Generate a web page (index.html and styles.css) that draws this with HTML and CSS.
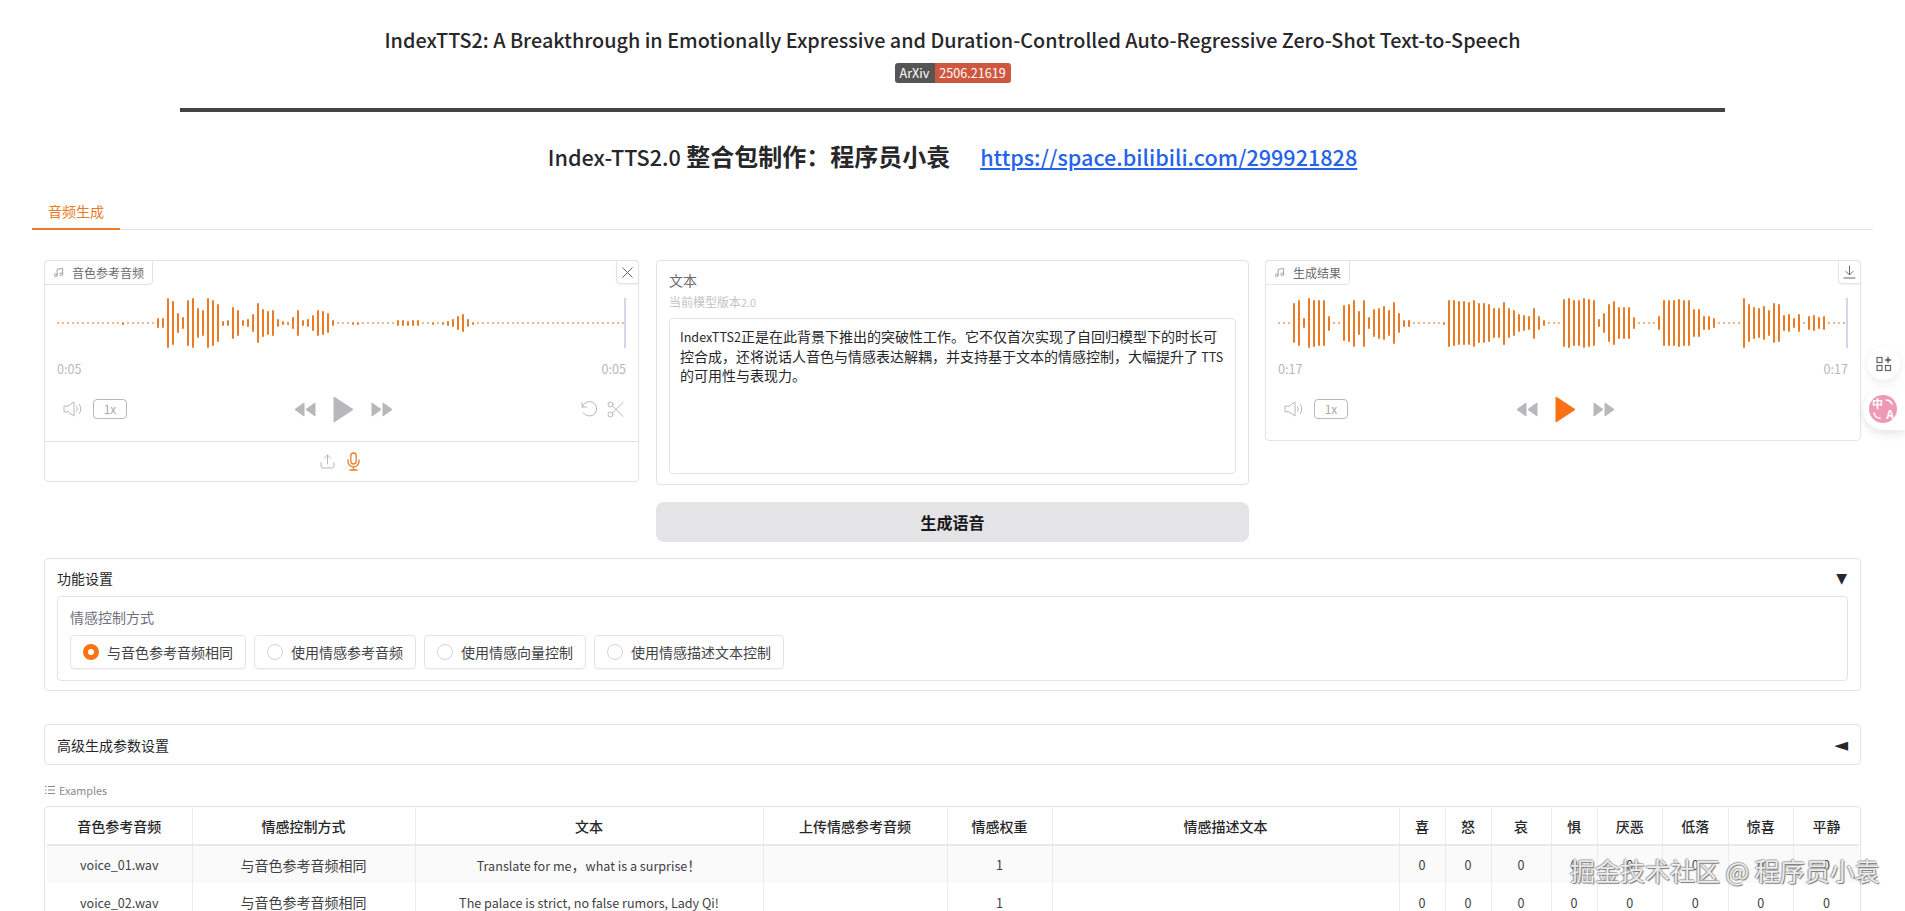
FILE: index.html
```html
<!DOCTYPE html>
<html lang="zh-CN">
<head>
<meta charset="utf-8">
<title>IndexTTS2</title>
<link rel="stylesheet" href="styles.css">
</head>
<body>
<svg class="defs" width="0" height="0" aria-hidden="true">
  <defs>
    <symbol id="i-note" viewBox="0 0 24 24"><path fill="none" stroke="currentColor" stroke-width="2" stroke-linecap="round" stroke-linejoin="round" d="M9 18V5l12-2v13"/><circle cx="6" cy="18" r="3" fill="none" stroke="currentColor" stroke-width="2"/><circle cx="18" cy="16" r="3" fill="none" stroke="currentColor" stroke-width="2"/></symbol>
    <symbol id="i-vol" viewBox="0 0 20 16"><path fill="none" stroke="currentColor" stroke-linejoin="round" d="M1 5.200h4L11 1v14L5 10.800H1z"/><path fill="none" stroke="currentColor" stroke-linecap="round" d="M13.500 5.500c.9 1.600.9 3.400 0 5M16.500 3.500c1.700 2.800 1.700 6.200 0 9"/></symbol>
    <symbol id="i-rew" viewBox="0 0 22 15"><path fill="currentColor" stroke="currentColor" stroke-linejoin="round" d="M10 1v13L1 7.500zM21 1v13l-9-6.500z"/></symbol>
    <symbol id="i-fwd" viewBox="0 0 22 15"><path fill="currentColor" stroke="currentColor" stroke-linejoin="round" d="M1 1v13l9-6.500zM12 1v13l9-6.500z"/></symbol>
    <symbol id="i-play" viewBox="0 0 21 27"><path fill="currentColor" stroke="currentColor" stroke-linejoin="round" d="M1 1v25l19-12.500z"/></symbol>
  </defs>
</svg>

<div class="page">
  <header class="hero">
    <h1 class="paper-title">IndexTTS2: A Breakthrough in Emotionally Expressive and Duration-Controlled Auto-Regressive Zero-Shot Text-to-Speech</h1>
    <div class="badge"><span class="badge-key">ArXiv</span><span class="badge-val">2506.21619</span></div>
    <hr class="rule">
    <h2 class="pack-title"><span class="latin">Index-TTS2.0</span> 整合包制作&#xFF1A;程序员小袁<a class="pack-link" href="#">https://space.bilibili.com/299921828</a></h2>
  </header>

  <nav class="tabs"><span class="tab">音频生成</span></nav>

  <main class="content">
    <section class="columns">
      <div class="audio-panel">
        <div class="block-label"><svg class="note"><use href="#i-note"/></svg>音色参考音频</div>
        <button class="corner-btn" aria-label="关闭">
          <svg width="11" height="11" viewBox="0 0 11 11"><path fill="none" stroke="currentColor" d="M.5.500l10 10M10.500.500l-10 10"/></svg>
        </button>
        <div class="wave-wrap"><div class="wave" data-wave="ref"></div><i class="cursor"></i></div>
        <div class="times"><span>0:05</span><span>0:05</span></div>
        <div class="controls">
          <div class="ctl-left">
            <svg class="vol"><use href="#i-vol"/></svg>
            <span class="rate">1x</span>
          </div>
          <div class="ctl-mid">
            <svg class="skip"><use href="#i-rew"/></svg>
            <svg class="play"><use href="#i-play"/></svg>
            <svg class="skip"><use href="#i-fwd"/></svg>
          </div>
          <div class="ctl-right">
            <svg class="tool" viewBox="0 0 17 17"><path fill="none" stroke="currentColor" stroke-linecap="round" stroke-linejoin="round" d="M1 1.500v4.500h4.500M1.300 6a7.300 7.300 0 1 1 1 5.800"/></svg>
            <svg class="tool" viewBox="0 0 17 17"><g fill="none" stroke="currentColor" stroke-linecap="round"><circle cx="3.500" cy="3.500" r="2.500"/><circle cx="3.500" cy="13.500" r="2.500"/><path d="M5.500 5L16 15.500M5.500 12L16 1.500"/></g></svg>
          </div>
        </div>
        <div class="sources">
          <svg class="src-up" viewBox="0 0 15 15"><path fill="none" stroke="currentColor" stroke-linecap="round" stroke-linejoin="round" d="M1 8.500v3.500a2 2 0 0 0 2 2h9a2 2 0 0 0 2-2V8.500M7.500 10V1M4.500 4l3-3 3 3"/></svg>
          <svg class="src-mic" viewBox="0 0 13 19"><g fill="none" stroke="currentColor" stroke-width="1.300" stroke-linecap="round"><rect x="3.800" y="1" width="5.400" height="11" rx="2.700"/><path d="M1 8v1.500a5.500 5.500 0 0 0 11 0V8M6.500 15v3M3 18h7"/></g></svg>
        </div>
      </div>

      <div class="text-col">
        <div class="text-panel">
          <div class="field-label">文本</div>
          <p class="field-info">当前模型版本<span class="lat">2.0</span></p>
          <div class="field-input"><span class="lat">IndexTTS2</span>正是在此背景下推出的突破性工作。它不仅首次实现了自回归模型下的时长可控合成&#xFF0C;还将说话人音色与情感表达解耦&#xFF0C;并支持基于文本的情感控制&#xFF0C;大幅提升了 <span class="lat">TTS</span> 的可用性与表现力。</div>
        </div>
        <button class="gen-btn">生成语音</button>
      </div>

      <div class="audio-panel result">
        <div class="block-label"><svg class="note"><use href="#i-note"/></svg>生成结果</div>
        <button class="corner-btn" aria-label="下载">
          <svg width="13" height="14" viewBox="0 0 13 14"><path fill="none" stroke="currentColor" stroke-linecap="round" stroke-linejoin="round" d="M6.500 1v8.500M3 6.500l3.500 3.500L10 6.500M1 13h11"/></svg>
        </button>
        <div class="wave-wrap"><div class="wave" data-wave="out"></div><i class="cursor"></i></div>
        <div class="times"><span>0:17</span><span>0:17</span></div>
        <div class="controls">
          <div class="ctl-left">
            <svg class="vol"><use href="#i-vol"/></svg>
            <span class="rate">1x</span>
          </div>
          <div class="ctl-mid">
            <svg class="skip"><use href="#i-rew"/></svg>
            <svg class="play on"><use href="#i-play"/></svg>
            <svg class="skip"><use href="#i-fwd"/></svg>
          </div>
          <div class="ctl-right"></div>
        </div>
      </div>
    </section>

    <section class="accordion open">
      <div class="acc-head"><span>功能设置</span><span class="acc-arrow">▼</span></div>
      <div class="group">
        <div class="group-label">情感控制方式</div>
        <div class="radios">
          <div class="radio"><i class="dot on"></i>与音色参考音频相同</div>
          <div class="radio"><i class="dot"></i>使用情感参考音频</div>
          <div class="radio"><i class="dot"></i>使用情感向量控制</div>
          <div class="radio"><i class="dot"></i>使用情感描述文本控制</div>
        </div>
      </div>
    </section>

    <section class="accordion closed">
      <div class="acc-head"><span>高级生成参数设置</span><span class="acc-arrow wide">◄</span></div>
    </section>

    <div class="examples-label">
      <svg width="10" height="10" viewBox="0 0 10 10"><path fill="none" stroke="currentColor" d="M3 1.500h7M3 5h7M3 8.500h7M0 1.500h1.500M0 5h1.500M0 8.500h1.500"/></svg>
      Examples
    </div>
    <div class="examples">
      <table>
        <colgroup>
          <col class="c1"><col class="c2"><col class="c3"><col class="c4"><col class="c5"><col class="c6">
          <col class="c7"><col class="c7"><col class="c8"><col class="c7"><col class="c9"><col class="c9"><col class="c9"><col class="c9">
        </colgroup>
        <thead>
          <tr><th>音色参考音频</th><th>情感控制方式</th><th>文本</th><th>上传情感参考音频</th><th>情感权重</th><th>情感描述文本</th><th>喜</th><th>怒</th><th>哀</th><th>惧</th><th>厌恶</th><th>低落</th><th>惊喜</th><th>平静</th></tr>
        </thead>
        <tbody>
          <tr class="alt"><td>voice_01.wav</td><td class="cjk">与音色参考音频相同</td><td class="cjk"><span class="lat">Translate for me</span>&#xFF0C;<span class="lat">what is a surprise</span>&#xFF01;</td><td></td><td>1</td><td></td><td>0</td><td>0</td><td>0</td><td>0</td><td>0</td><td>0</td><td>0</td><td>0</td></tr>
          <tr><td>voice_02.wav</td><td class="cjk">与音色参考音频相同</td><td>The palace is strict, no false rumors, Lady Qi!</td><td></td><td>1</td><td></td><td>0</td><td>0</td><td>0</td><td>0</td><td>0</td><td>0</td><td>0</td><td>0</td></tr>
        </tbody>
      </table>
    </div>
  </main>
</div>

<div class="float-apps">
  <svg width="16" height="16" viewBox="0 0 16 16"><g fill="none" stroke="#666" stroke-width="1.200"><rect x="1" y="1.500" width="5" height="5"/><rect x="1" y="9.500" width="5" height="5"/><rect x="9.500" y="9.500" width="5" height="5"/></g><path fill="#666" d="M12 0l1 2.800 3 1.200-3 1.200-1 2.800-1-2.800-3-1.200 3-1.200z"/></svg>
</div>
<div class="float-trans">
  <span class="trans-badge">
    <span class="zh">中</span><span class="en">A</span>
    <svg class="trans-arcs" width="28" height="28" viewBox="0 0 28 28"><path fill="none" stroke="#fff" stroke-width="1.500" stroke-linecap="round" d="M17 5c3 0 5 1.500 6 4M5 18c.5 3 2.500 5 6 5"/></svg>
  </span>
</div>
<div class="watermark">掘金技术社区 @ 程序员小袁</div>

<script src="script.js"></script>
</body>
</html>
```
FILE: styles.css
```css
* { box-sizing: border-box; }
html, body { margin: 0; height: 100%; overflow: hidden; background: #fff; }
body {
  font-family: "Noto Sans CJK SC", "Noto Sans", sans-serif;
  font-size: 14px;
  color: #27272a;
  position: relative;
}
.defs { position: absolute; }
.page { padding: 0 32px; }
.lat { font-size: .9em; }

/* Header */
.hero { display: flex; flex-direction: column; align-items: center; padding-top: 26px; }
.paper-title { margin: 0; font-size: 19.800px; line-height: 28px; font-weight: 500; color: #27272a; }
.badge { display: flex; margin-top: 9px; height: 20px; font-size: 12.600px; line-height: 19px; color: #fff; border-radius: 3px; overflow: hidden; }
.badge-key { background: #555; padding: 0 0 0 5px; width: 40px; }
.badge-val { background: #d0573f; width: 76px; text-align: center; }
.rule { width: 1545px; height: 4px; margin: 25px 0 0; border: 0; background: #444; }
.pack-title { margin: 28px 0 0; font-size: 24px; line-height: 32px; font-weight: 700; color: #27272a; }
.latin { font-size: 21.600px; font-weight: 500; }
.pack-link { margin-left: 30px; font-size: 21.600px; color: #2563eb; text-decoration: underline; font-weight: 500; }

/* Tabs */
.tabs { margin-top: 20px; border-bottom: 1px solid #e4e4e7; height: 37px; display: flex; }
.tab { width: 88px; height: 37px; line-height: 37px; text-align: center; color: #ea7a24; border-bottom: 2px solid #ea7a24; }

.content { padding: 30px 12px 0; }
.columns { display: grid; grid-template-columns: 595px 1fr 596px; gap: 16px; align-items: start; }

/* Audio panels */
.audio-panel { position: relative; height: 222px; border: 1px solid #e4e4e7; border-radius: 4px; padding: 37px 12px 0; }
.audio-panel.result { height: 181px; }
.block-label {
  position: absolute; left: -1px; top: -1px; height: 25px; padding: 0 8px;
  display: flex; align-items: center; gap: 8px;
  font-size: 12px; color: #6b6b70;
  border: 1px solid #e4e4e7; border-radius: 4px 0 4px 0; background: #fff;
}
.note { width: 11px; height: 11px; color: #999; }
.corner-btn {
  position: absolute; right: -1px; top: -1px; width: 23px; height: 24px; padding: 0;
  display: flex; align-items: center; justify-content: center;
  color: #666; background: #fff; border: 1px solid #e4e4e7; border-radius: 0 4px 0 4px;
  box-shadow: 0 1px 2px rgba(0,0,0,.06);
}
.wave-wrap { position: relative; height: 50px; }
.wave { display: flex; align-items: center; gap: 3px; height: 50px; overflow: hidden; }
.wave i { display: block; flex: none; width: 2px; background: #ea7c28; border-radius: 1px; }
.wave i.tick { opacity: .75; }
.cursor { position: absolute; right: 0; top: 0; width: 2px; height: 50px; background: #d6d6ea; }
.times { display: flex; justify-content: space-between; margin-top: 12px; height: 18px; line-height: 18px; font-size: 12.600px; color: #b8b8bc; }
.controls { display: grid; grid-template-columns: 1fr auto 1fr; align-items: center; height: 30px; margin-top: 16px; padding: 0 2px 0 6px; }
.ctl-left { display: flex; align-items: center; gap: 10px; }
.ctl-mid { display: flex; align-items: center; gap: 17px; }
.ctl-right { display: flex; justify-content: flex-end; gap: 9px; }
.vol { width: 20px; height: 16px; color: #b8b8bc; }
.rate { width: 34px; height: 20px; border: 1px solid #b8b8bc; border-radius: 4px; color: #aaa; font-size: 12px; line-height: 18px; text-align: center; }
.skip { width: 22px; height: 15px; color: #b8b8bc; }
.play { width: 21px; height: 27px; color: #b8b8bc; }
.play.on { color: #f97316; }
.tool { width: 17px; height: 17px; color: #b8b8bc; }
.sources { position: absolute; left: 0; right: 0; bottom: 0; height: 40px; border-top: 1px solid #e4e4e7; display: flex; align-items: center; justify-content: center; gap: 12px; padding-right: 3px; }
.src-up { width: 15px; height: 15px; color: #b8b8bc; }
.src-mic { width: 13px; height: 19px; color: #ea7a24; }

/* Text panel */
.text-col { display: flex; flex-direction: column; gap: 17px; padding-left: 1px; }
.text-panel { border: 1px solid #e4e4e7; border-radius: 4px; padding: 10px 12px; height: 225px; display: flex; flex-direction: column; }
.field-label { font-size: 14px; line-height: 18px; color: #6b6b70; }
.field-info { margin: 4px 0 7px; font-size: 12px; line-height: 18px; color: #c4c4c8; }
.field-input {
  flex: 1; padding: 8px 10px;
  line-height: 19.600px; color: #27272a;
  border: 1px solid #e4e4e7; border-radius: 4px; background: #fff;
}
.gen-btn { height: 40px; border: 0; border-radius: 8px; background: #e4e4e7; font: inherit; font-size: 16px; font-weight: 700; color: #18181b; }

/* Accordions */
.accordion { border: 1px solid #e4e4e7; border-radius: 4px; padding: 0 12px; }
.accordion.open { margin-top: 16px; height: 133px; }
.accordion.closed { margin-top: 33px; height: 41px; }
.acc-head { display: flex; justify-content: space-between; align-items: center; height: 37px; color: #27272a; }
.accordion.closed .acc-head { height: 39px; }
.acc-arrow { font-family: "DejaVu Sans", sans-serif; font-size: 14px; padding-right: 1px; }
.acc-arrow.wide { font-size: 18px; line-height: 20px; padding-right: 0; }
.group { border: 1px solid #e4e4e7; border-radius: 4px; padding: 11px 12px 0; height: 85px; }
.group-label { font-size: 14px; line-height: 18px; color: #71717a; }
.radios { display: flex; gap: 8px; margin-top: 9px; }
.radio { display: flex; align-items: center; gap: 8px; height: 34px; padding: 0 12px; border: 1px solid #e4e4e7; border-radius: 4px; box-shadow: 0 1px 1px rgba(0,0,0,.03); color: #3f3f46; }
.dot { flex: none; width: 16px; height: 16px; border-radius: 50%; border: 1px solid #d4d4d8; }
.dot.on { border: 5px solid #f97316; background: #fff; }

/* Examples */
.examples-label { display: flex; align-items: center; gap: 4px; margin-top: 16px; height: 18px; font-size: 10.800px; color: #8a8a90; padding-left: 1px; }
.examples { margin-top: 7px; border: 1px solid #e4e4e7; border-radius: 4px 4px 0 0; padding: 1px 2px 0; }
table { width: 1811px; table-layout: fixed; border-collapse: collapse; }
.c1 { width: 145px; } .c2 { width: 223px; } .c3 { width: 348px; } .c4 { width: 184px; }
.c5 { width: 105px; } .c6 { width: 347px; } .c7 { width: 46px; } .c8 { width: 60px; } .c9 { width: 65.500px; }
th, td { text-align: center; padding: 0; border-right: 1px solid #ececee; }
th:last-child, td:last-child { border-right: 0; }
th { height: 37px; font-size: 14px; font-weight: 500; color: #27272a; border-bottom: 2px solid #e8e8ea; }
td { height: 38px; font-size: 12.600px; color: #3f3f46; }
td.cjk { font-size: 14px; }
tr.alt td { background: #fafafa; }

/* Overlays */
.float-apps {
  position: absolute; left: 1867px; top: 347px; width: 33px; height: 33px; border-radius: 50%;
  display: flex; align-items: center; justify-content: center;
  background: #fff; box-shadow: 0 3px 8px rgba(0,0,0,.08);
}
.float-trans {
  position: absolute; left: 1863px; top: 388px; width: 42px; height: 42px; border-radius: 21px 0 0 21px;
  display: flex; align-items: center; padding-left: 6px;
  background: #fff; box-shadow: 0 4px 10px rgba(0,0,0,.1);
}
.trans-badge {
  position: relative; display: block; width: 28px; height: 28px; border-radius: 50%;
  background: #ee9ab5; color: #fff; font-weight: 700; line-height: 1;
}
.trans-badge .zh { position: absolute; left: 3px; top: 3px; font-size: 11px; }
.trans-badge .en { position: absolute; right: 3px; bottom: 3px; font-size: 12px; }
.trans-arcs { position: absolute; left: 0; top: 0; }
.watermark {
  position: absolute; left: 1570px; top: 852px; font-size: 25px; line-height: 36px; white-space: nowrap;
  color: rgba(255,255,255,.85);
  text-shadow: 1px 1px 1px #777, -1px 0 1px #999, 0 -1px 1px #aaa;
}
```
FILE: script.js
```js
function d(n) { return Array(n).fill(2); }

var waves = {
  ref: [].concat(
    d(13), [3], d(6),
    [10,10,50,44,20,12,46,50,30,26,50,46,38,5,6,32,26,6,8,18,40,28,24,26,8,4,3,12,26,6,8,16,26,24,20,6],
    d(3), [3,3], d(7),
    [6,6,5,6,6,2,2,3,2,3,5,8,14,18,8,3],
    d(30)
  ),
  out: [].concat(
    d(3),
    [40,46,10,50,47,46,46,15,2,2],
    [36,38,47,24,47,12,28,31,34,26,42,20,7,7],
    d(6),
    [3,47,46,44,44,43,47,40,40,38,30,30,43,30,26,18,16,14,31,14,6],
    d(3),
    [48,50,46,46,50,48,46,8,20,38,44,32,32,32,12],
    d(4),
    [14,46,46,46,48,46,46,28,28,14,14,10],
    d(5),
    [50,38,32,30,34,26,40,38,16,18,10,18,2,14,16,12,14],
    d(4)
  )
};

document.querySelectorAll('[data-wave]').forEach(function (el) {
  waves[el.dataset.wave].forEach(function (h) {
    var bar = document.createElement('i');
    bar.style.height = h + 'px';
    if (h <= 2) bar.className = 'tick';
    el.appendChild(bar);
  });
});
```
